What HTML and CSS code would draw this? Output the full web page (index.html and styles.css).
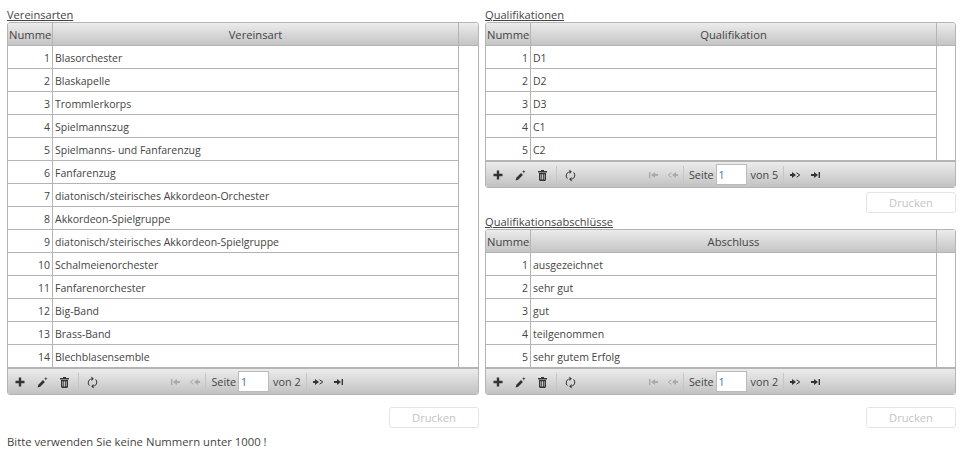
FILE: index.html
```html
<!DOCTYPE html>
<html lang="de">
<head>
    <meta charset="UTF-8">
    <title>Vereinsarten</title>
    <link rel="stylesheet" href="styles.css">
</head>
<body>

<svg class="sprites" width="0" height="0">
    <symbol id="i-add" viewBox="0 0 10 10"><path d="M3.800 .5h2.400v3.300h3.300v2.400H6.200v3.300H3.800V6.200H.5V3.800h3.300z"/></symbol>
    <symbol id="i-edit" viewBox="0 0 11 11"><path d="M.6 10.400l.7-2.600 4.700-4.700 1.900 1.900-4.700 4.700zM8.800 0l.5 1.200 1.200.5-1.200.5-.5 1.200-.5-1.200-1.200-.5 1.200-.5z"/></symbol>
    <symbol id="i-del" viewBox="0 0 11 11"><path d="M4 0h3v1h3v1.400H1V1h3zM2 3h7v7l-1 1H3l-1-1zm1.400 1.200V9.600h.9V4.200zm1.700 0V9.600h.9V4.200zm1.700 0V9.600h.8V4.200z"/></symbol>
    <symbol id="i-reload" viewBox="0 0 11 13"><path fill="none" stroke="currentColor" d="M3.800 3a4 4 0 0 0-1.400 6.600M7.200 10a4 4 0 0 0 1.400-6.600"/><path d="M4.400 .6v4.400L6.800 2.800zM6.600 8v4.400L4.200 10.200z"/></symbol>
    <symbol id="i-first" viewBox="0 0 9 6"><path d="M0 0h1.400v6H0zM2 3l4-3v6z"/><path d="M6 2h3v2H6z"/></symbol>
    <symbol id="i-prev" viewBox="0 0 11 6"><path fill="none" stroke="currentColor" d="M4.500 .8L1.200 3l3.300 2.200"/><path d="M5 3l4-3v6zM9 2h2v2H9z"/></symbol>
    <symbol id="i-next" viewBox="0 0 11 6"><path d="M0 2h2v2H0zM2 0l4 3-4 3z"/><path fill="none" stroke="currentColor" d="M6.500 .8L9.800 3 6.500 5.200"/></symbol>
    <symbol id="i-last" viewBox="0 0 9 6"><path d="M0 2h3v2H0zM3 0l4 3-4 3zM7.600 0H9v6H7.600z"/></symbol>
</svg>

<div class="page">
    <div class="col col-left">
        <div class="caption">Vereinsarten</div>
        <div class="grid">
            <div class="grid-head">
                <div class="th th-num">Nummer</div>
                <div class="th th-main">Vereinsart</div>
                <div class="th th-end"></div>
            </div>
            <div class="grid-body">
                <div class="row"><span class="num">1</span><span class="txt">Blasorchester</span></div>
                <div class="row"><span class="num">2</span><span class="txt">Blaskapelle</span></div>
                <div class="row"><span class="num">3</span><span class="txt">Trommlerkorps</span></div>
                <div class="row"><span class="num">4</span><span class="txt">Spielmannszug</span></div>
                <div class="row"><span class="num">5</span><span class="txt">Spielmanns- und Fanfarenzug</span></div>
                <div class="row"><span class="num">6</span><span class="txt">Fanfarenzug</span></div>
                <div class="row"><span class="num">7</span><span class="txt">diatonisch/steirisches Akkordeon-Orchester</span></div>
                <div class="row"><span class="num">8</span><span class="txt">Akkordeon-Spielgruppe</span></div>
                <div class="row"><span class="num">9</span><span class="txt">diatonisch/steirisches Akkordeon-Spielgruppe</span></div>
                <div class="row"><span class="num">10</span><span class="txt">Schalmeienorchester</span></div>
                <div class="row"><span class="num">11</span><span class="txt">Fanfarenorchester</span></div>
                <div class="row"><span class="num">12</span><span class="txt">Big-Band</span></div>
                <div class="row"><span class="num">13</span><span class="txt">Brass-Band</span></div>
                <div class="row"><span class="num">14</span><span class="txt">Blechblasensemble</span></div>
            </div>
            <div class="pager">
                <div class="tools">
                    <svg class="ic ic-add"><use href="#i-add"/></svg>
                    <svg class="ic ic-edit"><use href="#i-edit"/></svg>
                    <svg class="ic ic-del"><use href="#i-del"/></svg>
                    <span class="sep"></span>
                    <svg class="ic ic-reload"><use href="#i-reload"/></svg>
                </div>
                <div class="nav">
                    <svg class="ic ic-first off"><use href="#i-first"/></svg>
                    <svg class="ic ic-prev off"><use href="#i-prev"/></svg>
                    <span class="sep"></span>
                    <span>Seite</span>
                    <input class="page-input" type="text" value="1">
                    <span>von 2</span>
                    <span class="sep sep-end"></span>
                    <svg class="ic ic-next"><use href="#i-next"/></svg>
                    <svg class="ic ic-last"><use href="#i-last"/></svg>
                </div>
            </div>
        </div>
        <div class="actions actions-left"><button class="btn" disabled>Drucken</button></div>
        <div class="note">Bitte verwenden Sie keine Nummern unter 1000 !</div>
    </div>

    <div class="col col-right">
        <div class="caption">Qualifikationen</div>
        <div class="grid">
            <div class="grid-head">
                <div class="th th-num">Nummer</div>
                <div class="th th-main">Qualifikation</div>
                <div class="th th-end"></div>
            </div>
            <div class="grid-body">
                <div class="row"><span class="num">1</span><span class="txt">D1</span></div>
                <div class="row"><span class="num">2</span><span class="txt">D2</span></div>
                <div class="row"><span class="num">3</span><span class="txt">D3</span></div>
                <div class="row"><span class="num">4</span><span class="txt">C1</span></div>
                <div class="row"><span class="num">5</span><span class="txt">C2</span></div>
            </div>
            <div class="pager">
                <div class="tools">
                    <svg class="ic ic-add"><use href="#i-add"/></svg>
                    <svg class="ic ic-edit"><use href="#i-edit"/></svg>
                    <svg class="ic ic-del"><use href="#i-del"/></svg>
                    <span class="sep"></span>
                    <svg class="ic ic-reload"><use href="#i-reload"/></svg>
                </div>
                <div class="nav">
                    <svg class="ic ic-first off"><use href="#i-first"/></svg>
                    <svg class="ic ic-prev off"><use href="#i-prev"/></svg>
                    <span class="sep"></span>
                    <span>Seite</span>
                    <input class="page-input" type="text" value="1">
                    <span>von 5</span>
                    <span class="sep sep-end"></span>
                    <svg class="ic ic-next"><use href="#i-next"/></svg>
                    <svg class="ic ic-last"><use href="#i-last"/></svg>
                </div>
            </div>
        </div>
        <div class="actions actions-mid"><button class="btn" disabled>Drucken</button></div>

        <div class="caption">Qualifikationsabschlüsse</div>
        <div class="grid">
            <div class="grid-head">
                <div class="th th-num">Nummer</div>
                <div class="th th-main">Abschluss</div>
                <div class="th th-end"></div>
            </div>
            <div class="grid-body">
                <div class="row"><span class="num">1</span><span class="txt">ausgezeichnet</span></div>
                <div class="row"><span class="num">2</span><span class="txt">sehr gut</span></div>
                <div class="row"><span class="num">3</span><span class="txt">gut</span></div>
                <div class="row"><span class="num">4</span><span class="txt">teilgenommen</span></div>
                <div class="row"><span class="num">5</span><span class="txt">sehr gutem Erfolg</span></div>
            </div>
            <div class="pager">
                <div class="tools">
                    <svg class="ic ic-add"><use href="#i-add"/></svg>
                    <svg class="ic ic-edit"><use href="#i-edit"/></svg>
                    <svg class="ic ic-del"><use href="#i-del"/></svg>
                    <span class="sep"></span>
                    <svg class="ic ic-reload"><use href="#i-reload"/></svg>
                </div>
                <div class="nav">
                    <svg class="ic ic-first off"><use href="#i-first"/></svg>
                    <svg class="ic ic-prev off"><use href="#i-prev"/></svg>
                    <span class="sep"></span>
                    <span>Seite</span>
                    <input class="page-input" type="text" value="1">
                    <span>von 2</span>
                    <span class="sep sep-end"></span>
                    <svg class="ic ic-next"><use href="#i-next"/></svg>
                    <svg class="ic ic-last"><use href="#i-last"/></svg>
                </div>
            </div>
        </div>
        <div class="actions actions-left"><button class="btn" disabled>Drucken</button></div>
    </div>
</div>

</body>
</html>
```

FILE: styles.css
```css
html, body { margin: 0; padding: 0; background: #fff; }
body { font-family: "Open Sans", sans-serif; font-size: 10.5px; color: #444; overflow: hidden; }
.sprites { display: block; height: 0; }

.page { display: grid; grid-template-columns: 472px 471px; column-gap: 6px; padding: 7px 0 0 7px; }
.col { display: flex; flex-direction: column; }
.col-left { --end: 19px; }
.col-right { --end: 18px; }

.caption { height: 15px; line-height: 15px; font-size: 11.1px; text-decoration: underline; color: #444; }

/* grid */
.grid { border: 1px solid #b4b4b4; border-radius: 3px; background: #fff; overflow: hidden; }
.grid-head { display: flex; height: 22px; border-bottom: 1px solid #b4b4b4; background: linear-gradient(180deg, #ececec, #c4c4c4); }
.th { line-height: 23px; font-size: 11.2px; text-align: center; color: #444; overflow: hidden; white-space: nowrap; }
.th-num { width: 40px; padding: 0 3px 0 1px; text-align: left; border-right: 1px solid #b4b4b4; }
.th-main { flex: 1; border-right: 1px solid #b4b4b4; }
.th-end { width: var(--end); }

.grid-body { margin-right: var(--end); border-right: 1px solid #b4b4b4; }
.row { display: flex; height: 22px; line-height: 25px; border-bottom: 1px solid #b4b4b4; }
.row:last-child { border-bottom: 0; }
.num { width: 42px; padding-right: 2px; text-align: right; border-right: 1px solid #b4b4b4; }
.txt { padding-left: 2px; white-space: nowrap; }

/* pager */
.pager { display: flex; align-items: center; height: 27px; border-top: 2px solid #b4b4b4; box-sizing: border-box; background: linear-gradient(180deg, #ececec, #c2c2c2); }
.tools { display: flex; align-items: center; padding-left: 7px; }
.nav { display: flex; align-items: center; flex: 1; justify-content: center; padding-right: 62px; font-size: 10.8px; }
.ic { display: block; margin-top: 1px; fill: #333; color: #333; }
.ic-add { width: 10px; height: 10px; }
.ic-edit { width: 11px; height: 11px; margin-left: 12px; }
.ic-del { width: 11px; height: 11px; margin-left: 11px; }
.ic-reload { width: 11px; height: 13px; margin-left: 8px; }
.ic-first, .ic-last { width: 9px; height: 6px; }
.ic-prev, .ic-next { width: 11px; height: 6px; }
.ic-prev { margin-left: 9px; }
.ic-last { margin-left: 10px; }
.off { fill: #aaa; color: #aaa; }
.sep { width: 1px; height: 18px; margin: 0 5px; background: #c6c6c6; }
.sep-end { margin-right: 6px; }
.tools .sep { margin: 0 0 0 8px; }
.page-input { width: 31px; height: 21px; margin: 0 4px 0 2px; padding: 0 0 0 2px; box-sizing: border-box; border: 1px solid #bbb; background: #fff; font: 10.5px "Open Sans", sans-serif; color: #3b6fa8; outline: none; }

/* buttons */
.actions { display: flex; justify-content: flex-end; }
.actions-left { margin-top: 12px; }
.actions-mid { margin-top: 4px; margin-bottom: 1px; }
.btn { width: 90px; height: 21px; padding: 0; background: #fff; border: 1px solid #e4e4e4; border-radius: 3px; font: 11.2px "Open Sans", sans-serif; color: #c4c4c4; }

.note { margin-top: 6px; line-height: 16px; font-size: 11.3px; color: #444; }
```
